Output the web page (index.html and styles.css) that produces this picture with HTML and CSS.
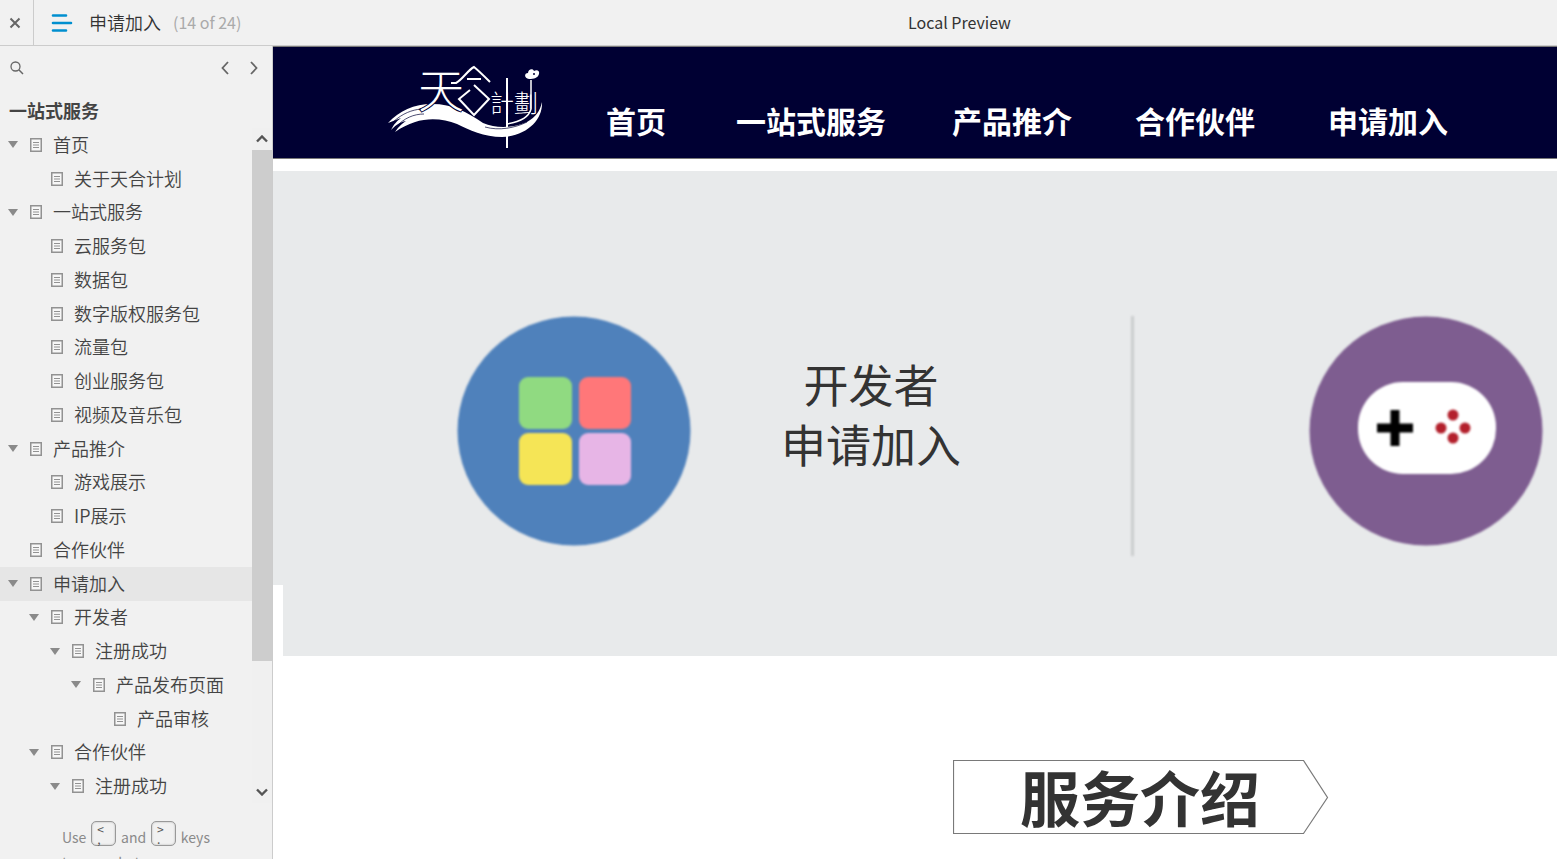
FILE: index.html
```html
<!DOCTYPE html>
<html lang="zh-CN">
<head>
<meta charset="utf-8">
<title>申请加入</title>
<link rel="stylesheet" href="styles.css">
</head>
<body>
<svg class="defs" aria-hidden="true">
  <symbol id="page" viewBox="0 0 12 14"><path d="M.75.75h10.5v12.5H.75z" fill="#f7f7f7" stroke="#929292" stroke-width="1.5"/><path d="M3 4.5h6M3 7h6M3 9.5h6" stroke="#929292"/></symbol>
  <symbol id="arrow" viewBox="0 0 10 7"><path d="M0 0h10L5 7z" fill="#8a8a8a"/></symbol>
</svg>
<header class="topbar">
  <button class="close" aria-label="Close"><svg width="12" height="12" viewBox="0 0 12 12"><path d="M1.5 1.5l9 9M10.5 1.5l-9 9" stroke="#666" stroke-width="2"/></svg></button>
  <button class="menu" aria-label="Sitemap"><svg width="22" height="18" viewBox="0 0 22 18"><path d="M2 1.5h13M2 9h18M2 16.5h13" stroke="#008fcf" stroke-width="2.6" stroke-linecap="round"/></svg></button>
  <span class="current">申请加入</span>
  <span class="count">(14 of 24)</span>
  <span class="mode">Local Preview</span>
</header>
<div class="workspace">
  <aside class="sidebar">
    <div class="tools">
      <button aria-label="Search"><svg width="14" height="14" viewBox="0 0 14 14"><circle cx="5.5" cy="5.5" r="4.5" fill="none" stroke="#666" stroke-width="1.3"/><path d="M8.8 8.8l4.2 4.2" stroke="#666" stroke-width="1.5"/></svg></button>
      <span class="pager">
        <button aria-label="Previous page"><svg width="8" height="14" viewBox="0 0 8 14"><path d="M7 1L1.5 7 7 13" fill="none" stroke="#666" stroke-width="1.8"/></svg></button>
        <button aria-label="Next page"><svg width="8" height="14" viewBox="0 0 8 14"><path d="M1 1l5.5 6L1 13" fill="none" stroke="#666" stroke-width="1.8"/></svg></button>
      </span>
    </div>
    <h2 class="project">一站式服务</h2>
    <div class="treewrap">
      <ul class="tree">
        <li><button class="tog" aria-label="Toggle"><svg><use href="#arrow"/></svg></button><svg class="pg"><use href="#page"/></svg><a href="#p1">首页</a></li>
        <li class="l1"><svg class="pg"><use href="#page"/></svg><a href="#p2">关于天合计划</a></li>
        <li><button class="tog" aria-label="Toggle"><svg><use href="#arrow"/></svg></button><svg class="pg"><use href="#page"/></svg><a href="#p3">一站式服务</a></li>
        <li class="l1"><svg class="pg"><use href="#page"/></svg><a href="#p4">云服务包</a></li>
        <li class="l1"><svg class="pg"><use href="#page"/></svg><a href="#p5">数据包</a></li>
        <li class="l1"><svg class="pg"><use href="#page"/></svg><a href="#p6">数字版权服务包</a></li>
        <li class="l1"><svg class="pg"><use href="#page"/></svg><a href="#p7">流量包</a></li>
        <li class="l1"><svg class="pg"><use href="#page"/></svg><a href="#p8">创业服务包</a></li>
        <li class="l1"><svg class="pg"><use href="#page"/></svg><a href="#p9">视频及音乐包</a></li>
        <li><button class="tog" aria-label="Toggle"><svg><use href="#arrow"/></svg></button><svg class="pg"><use href="#page"/></svg><a href="#p10">产品推介</a></li>
        <li class="l1"><svg class="pg"><use href="#page"/></svg><a href="#p11">游戏展示</a></li>
        <li class="l1"><svg class="pg"><use href="#page"/></svg><a href="#p12">IP展示</a></li>
        <li><svg class="pg"><use href="#page"/></svg><a href="#p13">合作伙伴</a></li>
        <li class="active"><button class="tog" aria-label="Toggle"><svg><use href="#arrow"/></svg></button><svg class="pg"><use href="#page"/></svg><a href="#p14">申请加入</a></li>
        <li class="l1"><button class="tog" aria-label="Toggle"><svg><use href="#arrow"/></svg></button><svg class="pg"><use href="#page"/></svg><a href="#p15">开发者</a></li>
        <li class="l2"><button class="tog" aria-label="Toggle"><svg><use href="#arrow"/></svg></button><svg class="pg"><use href="#page"/></svg><a href="#p16">注册成功</a></li>
        <li class="l3"><button class="tog" aria-label="Toggle"><svg><use href="#arrow"/></svg></button><svg class="pg"><use href="#page"/></svg><a href="#p17">产品发布页面</a></li>
        <li class="l4"><svg class="pg"><use href="#page"/></svg><a href="#p18">产品审核</a></li>
        <li class="l1"><button class="tog" aria-label="Toggle"><svg><use href="#arrow"/></svg></button><svg class="pg"><use href="#page"/></svg><a href="#p19">合作伙伴</a></li>
        <li class="l2"><button class="tog" aria-label="Toggle"><svg><use href="#arrow"/></svg></button><svg class="pg"><use href="#page"/></svg><a href="#p20">注册成功</a></li>
      </ul>
      <div class="scroll">
        <button aria-label="Scroll up"><svg width="12" height="8" viewBox="0 0 12 8"><path d="M1 6.5l5-5 5 5" fill="none" stroke="#555" stroke-width="2.4"/></svg></button>
        <div class="track"><div class="thumb"></div></div>
        <button aria-label="Scroll down"><svg width="12" height="8" viewBox="0 0 12 8"><path d="M1 1.5l5 5 5-5" fill="none" stroke="#555" stroke-width="2.4"/></svg></button>
      </div>
    </div>
    <div class="hint">
      <div class="keys">Use <kbd><span>&lt;</span><span>,</span></kbd> and <kbd><span>&gt;</span><span>.</span></kbd> keys</div>
      <div>to move between pages</div>
    </div>
  </aside>
  <main class="preview">
    <div class="banner">
      <svg class="logo" width="170" height="100" viewBox="0 0 170 100" role="img" aria-label="天合計劃">
        <g fill="#fff">
          <path d="M3 62C14 50 29 43 47 43C68 43 82 51 98 62C112 68 128 67 142 61C151 56 155 50 157 41C158 58 143 75 117 76C99 76 84 69 72 63C54 56 33 55 10 71C14 65 18 62 21 60C14 61 9 66 6 69C9 63 12 60 16 57Z"/>
          <path d="M144 18c-5-1-5-6-1-6 0-4 5-5 6-2 3-2 6 0 5 3-1 4-5 5-10 5z"/>
          <text x="105" y="51" font-size="24">計</text>
          <text x="129" y="51" font-size="24">劃</text>
        </g>
        <text x="33" y="46" font-size="46" fill="#fff" stroke="#000033" stroke-width="2" paint-order="stroke">天</text>
        <g fill="none" stroke="#fff" stroke-width="2">
          <path d="M66 22h5c6-3 12-13 18-16 5 4 10 9 16 15M82 18h14"/>
          <path d="M85 29l-11 9 15 16 15-16-15-14"/>
          <path d="M122 17v70"/>
          <path d="M146 19v29c-2 8-12 13-24 15" stroke-width="1.5"/>
        </g>
        <path d="M8 61c10-9 19-12 28-13M11 66c8-9 18-13 28-13M100 66c14 4 30 1 42-5" fill="none" stroke="#000033" stroke-width=".7"/>
        <circle cx="149" cy="13" r="1" fill="#000033"/>
      </svg>
      <nav class="nav">
        <a href="#home">首页</a>
        <a href="#services">一站式服务</a>
        <a href="#products">产品推介</a>
        <a href="#partners">合作伙伴</a>
        <a href="#apply">申请加入</a>
      </nav>
    </div>
    <section class="hero">
      <svg class="badge" width="234" height="230" viewBox="0 0 234 230" aria-hidden="true">
        <ellipse cx="117" cy="115" rx="116.5" ry="114.5" fill="#4f81bb"/>
        <rect x="62" y="61" width="53" height="52" rx="9" fill="#90da81"/>
        <rect x="122" y="61" width="52" height="52" rx="9" fill="#ff7779"/>
        <rect x="62" y="117" width="53" height="52" rx="9" fill="#f5e556"/>
        <rect x="122" y="117" width="52" height="52" rx="9" fill="#e7b5e6"/>
      </svg>
      <h1>开发者<br>申请加入</h1>
      <div class="divider"></div>
      <svg class="badge" width="234" height="230" viewBox="0 0 234 230" aria-hidden="true">
        <ellipse cx="117" cy="115" rx="116.5" ry="114.5" fill="#7e5d90"/>
        <rect x="49" y="66" width="138" height="92" rx="45" fill="#fff"/>
        <path d="M86 94v36M68 112h36" stroke="#000" stroke-width="9"/>
        <g fill="#b3202c"><circle cx="144" cy="99" r="5.5"/><circle cx="132" cy="112" r="5.5"/><circle cx="156" cy="112" r="5.5"/><circle cx="144" cy="122" r="5.5"/></g>
      </svg>
    </section>
    <section class="intro">
      <svg width="376" height="75" viewBox="0 0 376 75" aria-hidden="true"><path d="M.5.5h350l24 37-24 36H.5z" fill="#fff" stroke="#797979" stroke-width="1.2"/></svg>
      <h2>服务介绍</h2>
    </section>
  </main>
</div>
</body>
</html>
```
FILE: styles.css
```css
* { box-sizing: border-box; }
body {
  margin: 0;
  height: 100vh;
  display: flex;
  flex-direction: column;
  overflow: hidden;
  background: #fff;
  color: #444;
  font-family: "Noto Sans CJK SC", sans-serif;
}
button {
  border: 0;
  padding: 0;
  background: none;
  display: grid;
  place-items: center;
}
a { color: inherit; text-decoration: none; }
h1, h2, ul { margin: 0; padding: 0; }
.defs { position: absolute; width: 0; height: 0; }

.topbar {
  flex: none;
  height: 46px;
  display: flex;
  align-items: center;
  background: #f1f1f1;
  border-bottom: 1px solid #ccc;
}
.topbar span { padding-bottom: 2px; }
.close { width: 34px; height: 45px; padding-right: 3px; border-right: 1px solid #ccc; }
.menu { width: 55px; }
.current { font-size: 18px; font-weight: 350; color: #333; }
.count { width: 183px; margin-left: 12px; font-size: 16px; color: #aaa; }
.mode { flex: 1; text-align: center; font-size: 16px; color: #333; margin-left: 6px; }

.workspace { flex: 1; min-height: 0; display: flex; }
.sidebar {
  flex: none;
  width: 273px;
  display: flex;
  flex-direction: column;
  background: #f1f1f1;
  border-right: 1px solid #ccc;
}
.tools {
  height: 44px;
  padding: 0 14px 0 10px;
  display: flex;
  align-items: center;
  justify-content: space-between;
}
.pager { display: flex; gap: 21px; }
.project { height: 38px; padding-left: 9px; font-size: 18px; line-height: 40px; }
.treewrap { flex: 1; min-height: 0; display: flex; }
.tree { flex: 1; list-style: none; display: grid; grid-auto-rows: 1fr; }
.tree li {
  display: flex;
  align-items: center;
  justify-content: flex-start;
  padding-left: 8px;
  font-size: 18px;
  font-weight: 350;
  line-height: 28px;
}
.tree a { padding-bottom: 2px; white-space: nowrap; }
.tree .l1 { padding-left: 29px; }
.tree .l2 { padding-left: 50px; }
.tree .l3 { padding-left: 71px; }
.tree .l4 { padding-left: 92px; }
.tree .active { background: #e6e6e6; }
.tog { width: 22px; justify-items: start; }
.tog svg { width: 10px; height: 7px; }
.pg { width: 12px; height: 14px; margin-right: 11px; }
.pg:first-child { margin-left: 22px; }
.scroll { width: 20px; display: flex; flex-direction: column; background: #f0f0f0; }
.scroll button { height: 22px; }
.track { flex: 1; }
.thumb { height: 81%; background: #cdcdcd; }
.hint {
  height: 56px;
  padding-top: 16px;
  overflow: hidden;
  text-align: center;
  font-size: 14px;
  line-height: 22px;
  color: #8a8a8a;
}
.hint > div { width: 148px; margin: 0 auto; text-align: left; white-space: nowrap; }
.keys { height: 32px; display: flex; justify-content: space-between; }
.hint .keys { line-height: 36px; }
kbd {
  width: 25px;
  height: 25px;
  margin-top: 2px;
  padding: 2px 0 0 5px;
  border: 1px solid #999;
  border-radius: 5px;
  box-shadow: inset 0 0 2px #aaa;
  font-family: inherit;
  font-size: 12px;
  color: #555;
  display: flex;
  flex-direction: column;
}
kbd span { height: 10px; line-height: 10px; }

.preview { flex: 1; min-width: 0; overflow: hidden; }
.banner {
  height: 113px;
  display: flex;
  background: #000033;
  border: solid #797979;
  border-width: 1px 0;
}
.logo { flex: none; margin: 14px 51px 0 112px; font-weight: 300; }
.nav {
  display: grid;
  grid-template-columns: 130px 216px 183px 193px 120px;
  padding-top: 51px;
  font-size: 30px;
  line-height: 44px;
  font-weight: 700;
  color: #fff;
  white-space: nowrap;
}
.hero {
  position: relative;
  height: 485px;
  margin-top: 12px;
  padding: 145px 14px 0 184px;
  display: flex;
  align-items: flex-start;
  background: #e8eaeb;
}
.hero::after {
  content: "";
  position: absolute;
  left: 0;
  bottom: 0;
  width: 10px;
  height: 71px;
  background: #fff;
}
.badge { flex: none; filter: blur(1px); }
.hero h1 {
  margin: 38px 170px 0 90px;
  font-size: 45px;
  line-height: 60px;
  font-weight: 400;
  text-align: center;
  color: #333;
  white-space: nowrap;
}
.divider { flex: none; width: 3px; height: 240px; margin-right: 175px; background: #cbcdce; filter: blur(1px); }
.intro {
  width: 376px;
  margin: 104px 0 0 680px;
  display: grid;
}
.intro > * { grid-area: 1 / 1; }
.intro h2 { padding-left: 67px; font-size: 60px; line-height: 72px; color: #333; }
```
